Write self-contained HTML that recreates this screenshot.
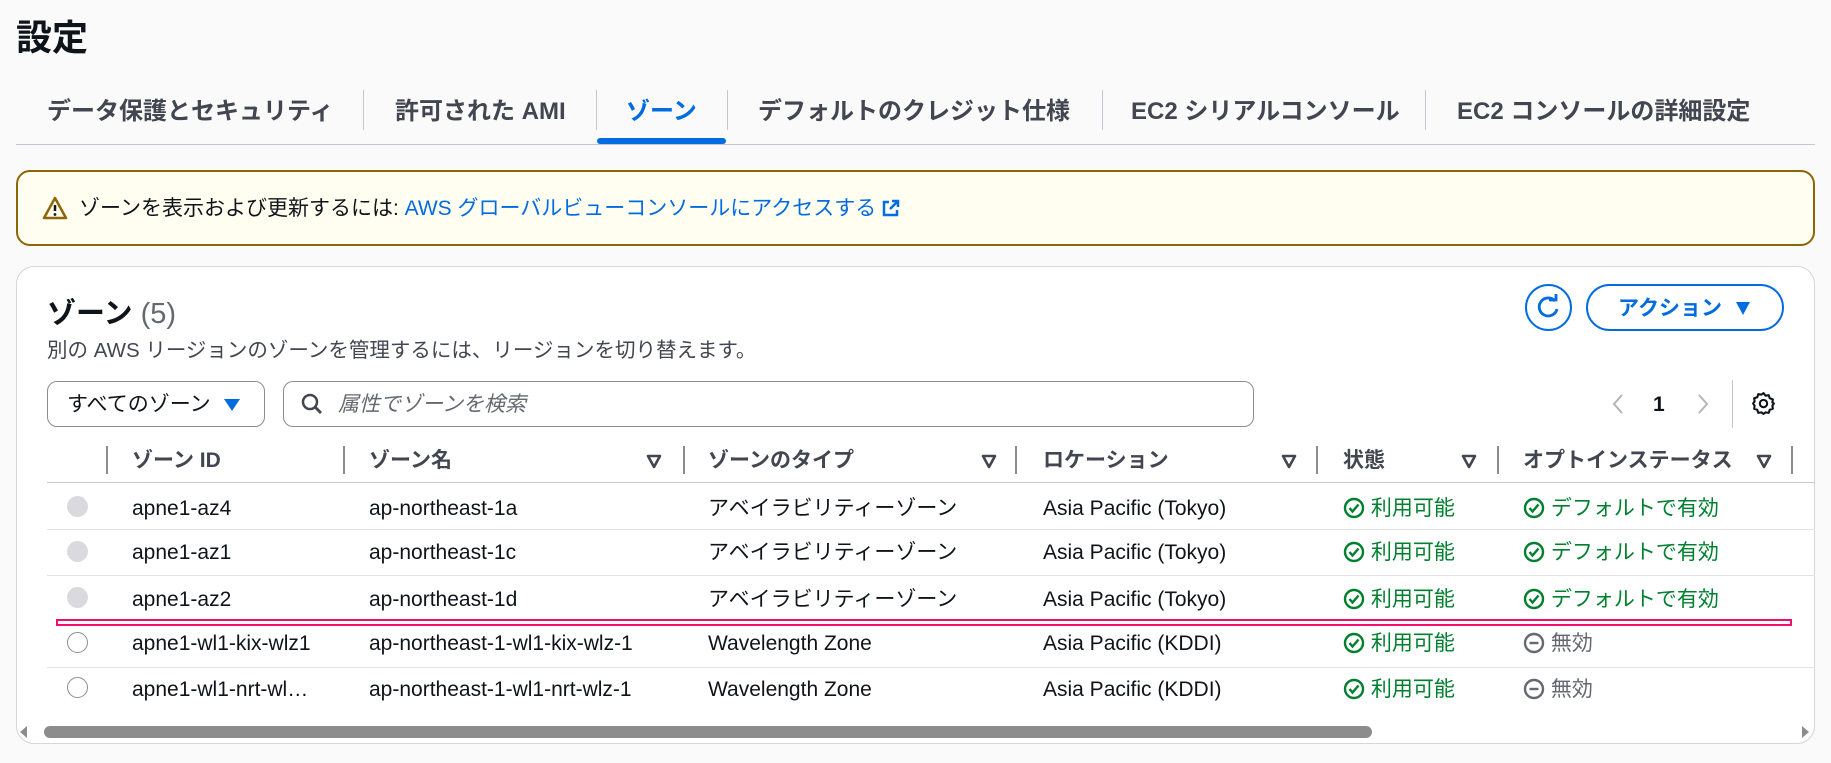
<!DOCTYPE html><html><head><meta charset="utf-8"><style>
*{box-sizing:border-box;margin:0;padding:0}
body{width:1831px;height:763px;background:#fafafa;font-family:"Liberation Sans","Noto Sans CJK JP",sans-serif;color:#0f141a;position:relative;overflow:hidden;font-size:21px}
.a{position:absolute;white-space:nowrap}
.tab{position:absolute;top:98px;font-size:24px;line-height:28px;font-weight:bold;color:#424650}
.sep{position:absolute;width:1px;background:#c6c6cd}
.hd{position:absolute;top:448px;font-size:21px;line-height:26px;font-weight:bold;color:#424650}
.tri{position:absolute;top:453px}
.cell{position:absolute;font-size:21px;line-height:26px;color:#0f141a}
.ok{color:#00802f}
.radio{position:absolute;left:67px;width:21px;height:21px;border-radius:50%}
</style></head><body>
<div class="a" style="left:16px;top:9px;font-size:36px;font-weight:bold">設定</div>
<div class="tab" style="left:47px">データ保護とセキュリティ</div>
<div class="sep" style="left:363px;top:90px;height:40px"></div>
<div class="tab" style="left:395px">許可された AMI</div>
<div class="sep" style="left:596px;top:90px;height:40px"></div>
<div class="tab" style="left:626px;color:#006ce0">ゾーン</div>
<div class="sep" style="left:727px;top:90px;height:40px"></div>
<div class="tab" style="left:758px">デフォルトのクレジット仕様</div>
<div class="sep" style="left:1102px;top:90px;height:40px"></div>
<div class="tab" style="left:1131px">EC2 シリアルコンソール</div>
<div class="sep" style="left:1425px;top:90px;height:40px"></div>
<div class="tab" style="left:1457px">EC2 コンソールの詳細設定</div>
<div class="a" style="left:16px;top:144px;width:1799px;height:1px;background:#c6c6cd"></div>
<div class="a" style="left:597px;top:138px;width:129px;height:6px;border-radius:3px;background:#006ce0"></div>

<div class="a" style="left:16px;top:170px;width:1799px;height:76px;border:2.5px solid #8d6605;border-radius:14px;background:#fffef0"></div>
<svg class="a" style="left:42px;top:196px" width="26" height="24" viewBox="0 0 26 24"><path d="M13 2 L24 22 H2 Z" fill="none" stroke="#8d6605" stroke-width="2.5" stroke-linejoin="round"/><path d="M13 9v6" stroke="#0f141a" stroke-width="2.5"/><circle cx="13" cy="18.5" r="1.4" fill="#0f141a"/></svg>
<div class="a" style="left:79px;top:196px;font-size:21px;line-height:26px">ゾーンを表示および更新するには: <span style="color:#006ce0">AWS グローバルビューコンソールにアクセスする</span> <svg width="18" height="18" viewBox="0 0 18 18" style="vertical-align:-2px"><path d="M7 3H2v13h13v-5" fill="none" stroke="#006ce0" stroke-width="2.5"/><path d="M10 2h6v6M16 2 8 10" fill="none" stroke="#006ce0" stroke-width="2.5"/></svg></div>

<div class="a" style="left:16px;top:266px;width:1799px;height:478px;border:1px solid #d5d5da;border-radius:18px;background:#fff"></div>
<div class="a" style="left:47px;top:290px;font-size:29px;font-weight:bold">ゾーン <span style="font-weight:normal;color:#656871">(5)</span></div>
<div class="a" style="left:47px;top:338px;font-size:20.5px;line-height:26px;color:#424650">別の AWS リージョンのゾーンを管理するには、リージョンを切り替えます。</div>
<div class="a" style="left:1525px;top:284px;width:47px;height:47px;border:2.5px solid #006ce0;border-radius:50%"></div>
<svg class="a" style="left:1535px;top:294px" width="27" height="27" viewBox="0 0 27 27"><path d="M20 7 A9 9 0 1 0 22 15" fill="none" stroke="#006ce0" stroke-width="2.8"/><path d="M14 6h7V0" fill="none" stroke="#006ce0" stroke-width="2.8"/></svg>
<div class="a" style="left:1586px;top:284px;width:198px;height:47px;border:2.5px solid #006ce0;border-radius:24px;color:#006ce0;font-weight:bold;font-size:21px;line-height:26px;padding:10px 0 0 30px">アクション <span style="display:inline-block;margin-left:8px;width:0;height:0;border-left:7px solid transparent;border-right:7px solid transparent;border-top:13px solid #006ce0"></span></div>

<div class="a" style="left:47px;top:381px;width:218px;height:46px;border:1.5px solid #8c8c94;border-radius:10px;padding:10px 0 0 19px;font-size:21px;line-height:26px">すべてのゾーン <span style="display:inline-block;margin-left:8px;width:0;height:0;border-left:8px solid transparent;border-right:8px solid transparent;border-top:12px solid #006ce0"></span></div>
<div class="a" style="left:283px;top:381px;width:971px;height:46px;border:1.5px solid #8c8c94;border-radius:10px"></div>
<svg class="a" style="left:301px;top:393px" width="22" height="22" viewBox="0 0 22 22"><circle cx="9" cy="9" r="7" fill="none" stroke="#424650" stroke-width="2.5"/><path d="M14 14l6 6" stroke="#424650" stroke-width="2.8"/></svg>
<div class="a" style="left:338px;top:392px;font-style:italic;color:#656871;font-size:21px;line-height:26px">属性でゾーンを検索</div>
<svg class="a" style="left:1610px;top:392px" width="16" height="24" viewBox="0 0 16 24"><path d="M12 3 4 12l8 9" fill="none" stroke="#b4b4bb" stroke-width="2"/></svg>
<div class="a" style="left:1653px;top:392px;font-weight:bold;font-size:21px;line-height:26px">1</div>
<svg class="a" style="left:1695px;top:392px" width="16" height="24" viewBox="0 0 16 24"><path d="M4 3l8 9-8 9" fill="none" stroke="#b4b4bb" stroke-width="2"/></svg>
<div class="sep" style="left:1732px;top:380px;height:48px"></div>
<svg class="a" style="left:1751px;top:391px" width="25" height="25" viewBox="0 0 24 24"><path d="M12 2l2 2.5 3-.5 1 3 3 1-.5 3L22 12l-1.5 2 .5 3-3 1-1 3-3-.5L12 22l-2-1.5-3 .5-1-3-3-1 .5-3L2 12l1.5-2-.5-3 3-1 1-3 3 .5z" fill="none" stroke="#0f141a" stroke-width="2" stroke-linejoin="round"/><circle cx="12" cy="12" r="3.5" fill="none" stroke="#0f141a" stroke-width="2"/></svg>

<div class="sep" style="left:106px;top:446px;height:28px;width:2px;background:#8c8c94"></div>
<div class="sep" style="left:343px;top:446px;height:28px;width:2px;background:#8c8c94"></div>
<div class="sep" style="left:683px;top:446px;height:28px;width:2px;background:#8c8c94"></div>
<div class="sep" style="left:1015px;top:446px;height:28px;width:2px;background:#8c8c94"></div>
<div class="sep" style="left:1316px;top:446px;height:28px;width:2px;background:#8c8c94"></div>
<div class="sep" style="left:1497px;top:446px;height:28px;width:2px;background:#8c8c94"></div>
<div class="sep" style="left:1791px;top:446px;height:28px;width:2px;background:#8c8c94"></div>
<svg width="0" height="0" style="position:absolute"><defs><symbol id="tr" viewBox="0 0 16 16"><path d="M2 3h12L8 14z" fill="none" stroke="#424650" stroke-width="2.6" stroke-linejoin="round"/></symbol></defs></svg>
<div class="hd" style="left:132px">ゾーン ID</div>
<div class="hd" style="left:369px">ゾーン名</div><svg class="tri" style="left:646px" width="16" height="16"><use href="#tr"/></svg>
<div class="hd" style="left:708px">ゾーンのタイプ</div><svg class="tri" style="left:981px" width="16" height="16"><use href="#tr"/></svg>
<div class="hd" style="left:1043px">ロケーション</div><svg class="tri" style="left:1281px" width="16" height="16"><use href="#tr"/></svg>
<div class="hd" style="left:1343px">状態</div><svg class="tri" style="left:1461px" width="16" height="16"><use href="#tr"/></svg>
<div class="hd" style="left:1523px">オプトインステータス</div><svg class="tri" style="left:1756px" width="16" height="16"><use href="#tr"/></svg>
<div class="a" style="left:47px;top:482px;width:1768px;height:1px;background:#c6c6cd"></div>
<div class="a" style="left:47px;top:529px;width:1768px;height:1px;background:#e3e3e7"></div>
<div class="a" style="left:47px;top:575px;width:1768px;height:1px;background:#e3e3e7"></div>
<div class="a" style="left:47px;top:667px;width:1768px;height:1px;background:#e3e3e7"></div>
<div class="a" style="left:56px;top:619px;width:1736px;height:7px;border:2px solid #f50a6e"></div>

<div class="radio" style="top:496px;background:#dadade"></div>
<div class="radio" style="top:541px;background:#dadade"></div>
<div class="radio" style="top:587px;background:#dadade"></div>
<div class="radio" style="top:632px;border:1.5px solid #8c8c94"></div>
<div class="radio" style="top:677px;border:1.5px solid #8c8c94"></div>

<svg width="0" height="0" style="position:absolute"><defs><symbol id="ck" viewBox="0 0 22 22"><circle cx="11" cy="11" r="9" fill="none" stroke="#00802f" stroke-width="2.4"/><path d="M6.5 11l3 3.5 6-7" fill="none" stroke="#00802f" stroke-width="2.4"/></symbol><symbol id="no" viewBox="0 0 22 22"><circle cx="11" cy="11" r="9" fill="none" stroke="#656871" stroke-width="2.4"/><path d="M6.5 11h9" stroke="#656871" stroke-width="2.4"/></symbol></defs></svg>

<div class="cell" style="left:132px;top:496px">apne1-az4</div><div class="cell" style="left:369px;top:496px">ap-northeast-1a</div><div class="cell" style="left:708px;top:496px">アベイラビリティーゾーン</div><div class="cell" style="left:1043px;top:496px">Asia Pacific (Tokyo)</div>
<div class="cell" style="left:132px;top:540px">apne1-az1</div><div class="cell" style="left:369px;top:540px">ap-northeast-1c</div><div class="cell" style="left:708px;top:540px">アベイラビリティーゾーン</div><div class="cell" style="left:1043px;top:540px">Asia Pacific (Tokyo)</div>
<div class="cell" style="left:132px;top:587px">apne1-az2</div><div class="cell" style="left:369px;top:587px">ap-northeast-1d</div><div class="cell" style="left:708px;top:587px">アベイラビリティーゾーン</div><div class="cell" style="left:1043px;top:587px">Asia Pacific (Tokyo)</div>
<div class="cell" style="left:132px;top:631px">apne1-wl1-kix-wlz1</div><div class="cell" style="left:369px;top:631px">ap-northeast-1-wl1-kix-wlz-1</div><div class="cell" style="left:708px;top:631px">Wavelength Zone</div><div class="cell" style="left:1043px;top:631px">Asia Pacific (KDDI)</div>
<div class="cell" style="left:132px;top:677px">apne1-wl1-nrt-wl…</div><div class="cell" style="left:369px;top:677px">ap-northeast-1-wl1-nrt-wlz-1</div><div class="cell" style="left:708px;top:677px">Wavelength Zone</div><div class="cell" style="left:1043px;top:677px">Asia Pacific (KDDI)</div>

<div class="cell ok" style="left:1343px;top:496px"><svg width="22" height="22" style="vertical-align:-4px"><use href="#ck"/></svg> 利用可能</div>
<div class="cell ok" style="left:1523px;top:496px"><svg width="22" height="22" style="vertical-align:-4px"><use href="#ck"/></svg> デフォルトで有効</div>
<div class="cell ok" style="left:1343px;top:540px"><svg width="22" height="22" style="vertical-align:-4px"><use href="#ck"/></svg> 利用可能</div>
<div class="cell ok" style="left:1523px;top:540px"><svg width="22" height="22" style="vertical-align:-4px"><use href="#ck"/></svg> デフォルトで有効</div>
<div class="cell ok" style="left:1343px;top:587px"><svg width="22" height="22" style="vertical-align:-4px"><use href="#ck"/></svg> 利用可能</div>
<div class="cell ok" style="left:1523px;top:587px"><svg width="22" height="22" style="vertical-align:-4px"><use href="#ck"/></svg> デフォルトで有効</div>
<div class="cell ok" style="left:1343px;top:631px"><svg width="22" height="22" style="vertical-align:-4px"><use href="#ck"/></svg> 利用可能</div>
<div class="cell" style="left:1523px;top:631px;color:#656871"><svg width="22" height="22" style="vertical-align:-4px"><use href="#no"/></svg> 無効</div>
<div class="cell ok" style="left:1343px;top:677px"><svg width="22" height="22" style="vertical-align:-4px"><use href="#ck"/></svg> 利用可能</div>
<div class="cell" style="left:1523px;top:677px;color:#656871"><svg width="22" height="22" style="vertical-align:-4px"><use href="#no"/></svg> 無効</div>

<div class="a" style="left:20px;top:726px;width:0;height:0;border-top:6px solid transparent;border-bottom:6px solid transparent;border-right:7px solid #8c8c8c"></div>
<div class="a" style="left:44px;top:726px;width:1328px;height:12px;border-radius:6px;background:#8c8c8c"></div>
<div class="a" style="left:1802px;top:726px;width:0;height:0;border-top:6px solid transparent;border-bottom:6px solid transparent;border-left:7px solid #8c8c8c"></div>
</body></html>
